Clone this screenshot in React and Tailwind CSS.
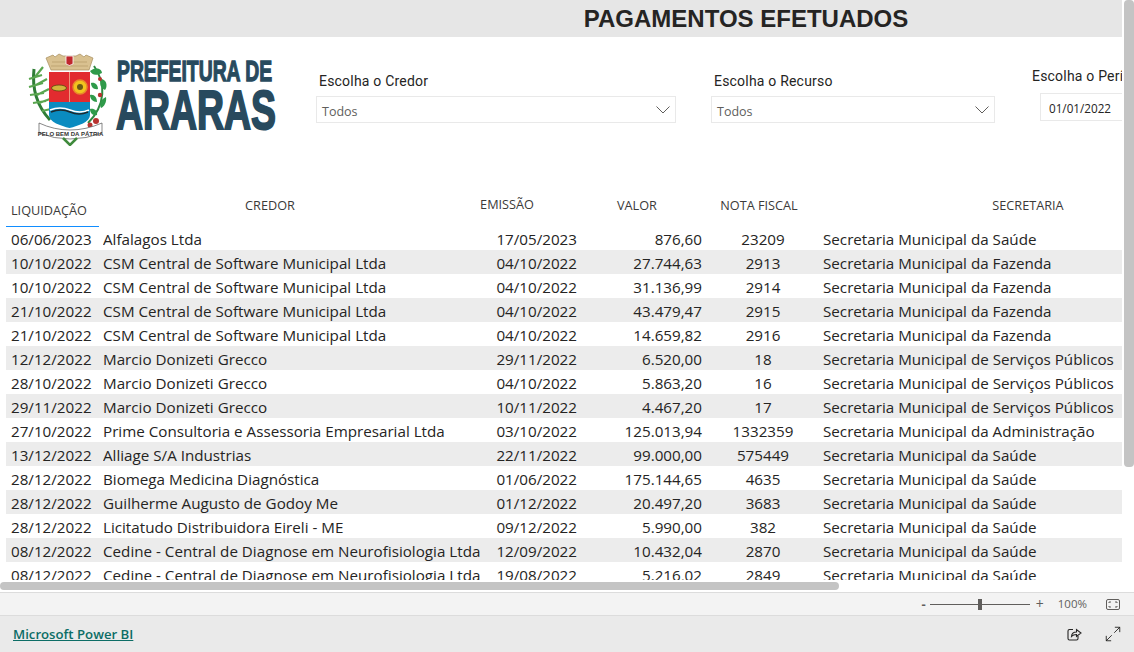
import { Maximize2 } from "lucide-react";

const rows = [
  ["06/06/2023", "Alfalagos Ltda", "17/05/2023", "876,60", "23209", "Secretaria Municipal da Saúde"],
  ["10/10/2022", "CSM Central de Software Municipal Ltda", "04/10/2022", "27.744,63", "2913", "Secretaria Municipal da Fazenda"],
  ["10/10/2022", "CSM Central de Software Municipal Ltda", "04/10/2022", "31.136,99", "2914", "Secretaria Municipal da Fazenda"],
  ["21/10/2022", "CSM Central de Software Municipal Ltda", "04/10/2022", "43.479,47", "2915", "Secretaria Municipal da Fazenda"],
  ["21/10/2022", "CSM Central de Software Municipal Ltda", "04/10/2022", "14.659,82", "2916", "Secretaria Municipal da Fazenda"],
  ["12/12/2022", "Marcio Donizeti Grecco", "29/11/2022", "6.520,00", "18", "Secretaria Municipal de Serviços Públicos"],
  ["28/10/2022", "Marcio Donizeti Grecco", "04/10/2022", "5.863,20", "16", "Secretaria Municipal de Serviços Públicos"],
  ["29/11/2022", "Marcio Donizeti Grecco", "10/11/2022", "4.467,20", "17", "Secretaria Municipal de Serviços Públicos"],
  ["27/10/2022", "Prime Consultoria e Assessoria Empresarial Ltda", "03/10/2022", "125.013,94", "1332359", "Secretaria Municipal da Administração"],
  ["13/12/2022", "Alliage S/A Industrias", "22/11/2022", "99.000,00", "575449", "Secretaria Municipal da Saúde"],
  ["28/12/2022", "Biomega Medicina Diagnóstica", "01/06/2022", "175.144,65", "4635", "Secretaria Municipal da Saúde"],
  ["28/12/2022", "Guilherme Augusto de Godoy Me", "01/12/2022", "20.497,20", "3683", "Secretaria Municipal da Saúde"],
  ["28/12/2022", "Licitatudo Distribuidora Eireli - ME", "09/12/2022", "5.990,00", "382", "Secretaria Municipal da Saúde"],
  ["08/12/2022", "Cedine - Central de Diagnose em Neurofisiologia Ltda", "12/09/2022", "10.432,04", "2870", "Secretaria Municipal da Saúde"],
  ["08/12/2022", "Cedine - Central de Diagnose em Neurofisiologia Ltda", "19/08/2022", "5.216,02", "2849", "Secretaria Municipal da Saúde"],
];

function Logo() {
  return (
    <svg width="254" height="93" viewBox="0 0 254 93" className="shrink-0">
      {/* sugar cane */}
      <path d="M8 16 C6 34 10 52 24 67" fill="none" stroke="#2f7d36" strokeWidth="3" />
      <path d="M3 26 L16 22 M3 34 L17 30 M4 42 L18 40 M7 50 L20 48 M17 14 L9 24 M21 26 L10 32 M23 36 L11 42 M24 46 L13 50 M25 56 L16 58" stroke="#5aa64f" strokeWidth="2.200" />
      {/* coffee branch */}
      <path d="M68 13 C80 30 80 52 62 70" fill="none" stroke="#2f8a42" strokeWidth="2" />
      <path d="M64 18 C70 13 76 16 76 20 C70 23 66 22 64 18 Z M76 26 C82 28 81 35 79 37 C74 35 73 30 76 26 Z M65 30 C69 29 72 32 72 36 C68 37 65 34 65 30 Z M64 42 C68 41 71 44 71 49 C67 49 64 46 64 42 Z M80 44 C81 49 78 54 75 55 C73 51 75 46 80 44 Z M64 56 C68 55 72 58 71 62 C67 63 64 60 64 56 Z" fill="#2f9a4a" />
      <circle cx="74" cy="26" r="2" fill="#b8322f" />
      <circle cx="74" cy="42" r="2.200" fill="#b8322f" />
      <circle cx="70" cy="68" r="3" fill="#b8322f" />
      <circle cx="64" cy="72" r="2.500" fill="#b8322f" />
      {/* crown */}
      <path d="M20 5 L27 2 L29 4 L33 1 L37 3 L50 3 L54 1 L58 4 L60 2 L67 5 L63 17 L25 17 Z" fill="#d9c190" stroke="#a68e5e" strokeWidth="0.700" />
      <path d="M26 9 H61 M25 13 H62" stroke="#b59c68" strokeWidth="0.700" />
      <path d="M40 3 H47 V11 Q43.500 14 40 11 Z" fill="#c0272d" stroke="#fff" strokeWidth="0.800" />
      {/* shield */}
      <path d="M23 19 H64 V49 H23 Z" fill="#e22b2f" />
      <path d="M23 49 H64 V62 C64 69 52 73 43.500 75 C35 73 23 69 23 62 Z" fill="#0a8bc0" />
      <path d="M24 57 Q34 53 44 57 T63 57" fill="none" stroke="#fff" strokeWidth="1.500" />
      <path d="M25 59 Q35 55 44 59 T62 59" fill="none" stroke="#1c2a30" strokeWidth="1.500" />
      <path d="M43.500 19 V49" stroke="#f2c6a0" strokeWidth="0.700" />
      <ellipse cx="33" cy="35" rx="7.500" ry="3" fill="#d2b53c" stroke="#5a4a10" strokeWidth="0.800" />
      <circle cx="54" cy="34" r="7" fill="#f2c41e" stroke="#e8892a" strokeWidth="1.500" />
      <circle cx="54" cy="34" r="3" fill="#6b5a14" />
      {/* motto ribbon */}
      <path d="M13 70 Q28 77 44 77 Q60 77 76 70 L76 80 Q60 86 44 86 Q28 86 13 80 Z" fill="#fff" stroke="#555" strokeWidth="0.700" />
      <text x="44.500" y="83" textAnchor="middle" fontSize="6" fontWeight="700" fill="#333" fontFamily="Liberation Sans, sans-serif">PELO BEM DA PÁTRIA</text>
      <path d="M37 85 L44 92 L51 85" fill="none" stroke="#3f8a3c" strokeWidth="2.500" />
      {/* name */}
      <text transform="translate(91 28) scale(0.645 1)" fontSize="30" fontWeight="700" fill="#284a5e" stroke="#284a5e" strokeWidth="1.300" fontFamily="Liberation Sans, sans-serif">PREFEITURA DE</text>
      <text transform="translate(90 76) scale(0.668 1)" fontSize="56" fontWeight="700" fill="#284a5e" stroke="#284a5e" strokeWidth="2" fontFamily="Liberation Sans, sans-serif">ARARAS</text>
    </svg>
  );
}

function Dropdown({ label, width, className }) {
  return (
    <div className={className} style={{ width }}>
      <div className="pl-[3px] font-['Roboto',sans-serif] text-[14px] leading-[18px] tracking-[0.2px] text-[#252423]">{label}</div>
      <div className="mt-[6px] flex h-[27px] items-center justify-between border border-[#e9e9e9] pl-[5px] pr-[5px] text-[#605e5c]">
        <span className="pt-[5px] text-[12.500px]">Todos</span>
        <svg width="14" height="8" viewBox="0 0 14 8" fill="none" stroke="#605e5c">
          <path d="M0.500 0.500 L7 7 L13.500 0.500" />
        </svg>
      </div>
    </div>
  );
}

export default function App() {
  return (
    <div className="relative flex h-[652px] w-[1134px] flex-col overflow-hidden bg-white font-['Open_Sans',sans-serif]">
      <div className="flex h-[37px] w-[1122px] shrink-0 items-center justify-center bg-[#e6e6e6] pl-[370px] font-['Liberation_Sans',sans-serif] text-[24px] font-bold text-[#252423]">
        PAGAMENTOS EFETUADOS
      </div>

      <div className="flex h-[144px] w-[1122px] shrink-0 overflow-hidden">
        <div className="ml-[26px] mt-[16px]">
          <Logo />
        </div>
        <Dropdown label="Escolha o Credor" width={360} className="ml-[36px] mt-[35px] shrink-0" />
        <Dropdown label="Escolha o Recurso" width={284} className="ml-[35px] mt-[35px] shrink-0" />
        <div className="ml-[37px] mt-[30px] w-[100px] shrink-0">
          <div className="whitespace-nowrap font-['Roboto',sans-serif] text-[14px] leading-[18px] tracking-[0.2px] text-[#252423]">Escolha o Período</div>
          <div className="ml-[8px] mt-[8px] flex h-[28px] w-[92px] items-center border border-[#e9e9e9] pl-[8px] pt-[3px] text-[11.700px] text-[#252423]">01/01/2022</div>
        </div>
      </div>

      <div className="h-[399px] w-[1122px] shrink-0 overflow-hidden pl-[6px]">
        <div className="flex h-[46px] text-[12.700px] text-[#3b3a39]">
          <div className="flex h-[46px] w-[93px] shrink-0 items-end border-b border-[#118dff] pb-[6px] pl-[5px]">LIQUIDAÇÃO</div>
          <div className="w-[342px] shrink-0 pt-[15px] text-center">CREDOR</div>
          <div className="w-[132px] shrink-0 pt-[14px] text-center">EMISSÃO</div>
          <div className="w-[128px] shrink-0 pt-[15px] text-center">VALOR</div>
          <div className="w-[116px] shrink-0 pt-[15px] text-center">NOTA FISCAL</div>
          <div className="w-[422px] shrink-0 pt-[15px] text-center">SECRETARIA</div>
        </div>
        <div className="mt-[-1px]">
          {rows.map((r, i) => (
            <div key={i} className={`flex h-[24px] items-center whitespace-nowrap pt-[2px] text-[15.200px] text-[#252423] ${i % 2 ? "bg-[#ececec]" : ""}`}>
              <div className="w-[97px] shrink-0 pl-[5px]">{r[0]}</div>
              <div className="w-[391px] shrink-0 overflow-hidden">{r[1]}</div>
              <div className="w-[83px] shrink-0 text-right">{r[2]}</div>
              <div className="w-[125px] shrink-0 text-right">{r[3]}</div>
              <div className="ml-[3px] w-[116px] shrink-0 text-center">{r[4]}</div>
              <div className="ml-[2px]">{r[5]}</div>
            </div>
          ))}
        </div>
      </div>

      {/* scrollbars sit over the report */}
      <div className="absolute left-0 top-[582px] h-[8px] w-[839px] rounded-[4px] bg-[#c4c4c4]" />
      <div className="absolute left-[1124px] top-0 h-[467px] w-[10px] rounded-[4px] bg-[#c4c4c4]" />

      <div className="h-[12px] shrink-0" />
      <div className="flex h-[24px] shrink-0 items-center justify-end border-y border-[#dcdcdc] bg-[#f3f3f3] pr-[14px] text-[11.500px] text-[#605e5c]">
        <span className="mr-[4px] text-[13px] font-bold leading-none">-</span>
        <div className="relative h-[1px] w-[100px] bg-[#605e5c]">
          <div className="absolute left-[48px] top-[-5px] h-[11px] w-[4px] bg-[#605e5c]" />
        </div>
        <span className="ml-[6px] text-[14px] leading-none">+</span>
        <span className="ml-[14px]">100%</span>
        <svg width="14" height="11" viewBox="0 0 14 11" fill="none" stroke="#605e5c" className="ml-[19px]">
          <rect x="0.500" y="0.500" width="13" height="10" rx="1.500" />
          <path d="M3 4V3H5M9 3H11V4M3 7V8H5M9 8H11V7" />
        </svg>
      </div>
      <div className="flex flex-1 items-center justify-between bg-[#eaeaea] pl-[13px] pr-[12px]">
        <a className="pt-[2px] text-[13.200px] font-semibold text-[#0d6d66] underline">Microsoft Power BI</a>
        <div className="flex items-center gap-[22px] text-[#252423]">
          <svg width="15" height="14" viewBox="0 0 15 14" fill="none" stroke="#252423" strokeWidth="1.100">
            <path d="M6 2.500 H2.500 Q1 2.500 1 4 V11.500 Q1 13 2.500 13 H9.500 Q11 13 11 11.500 V9" />
            <path d="M4.500 9.500 C4.700 6.500 6.500 5 9.500 5 V2.500 L14 6 L9.500 9.500 V7.500 C7.500 7.500 5.800 8 4.500 9.500 Z" />
          </svg>
          <Maximize2 size={18} strokeWidth={1.200} />
        </div>
      </div>
    </div>
  );
}
